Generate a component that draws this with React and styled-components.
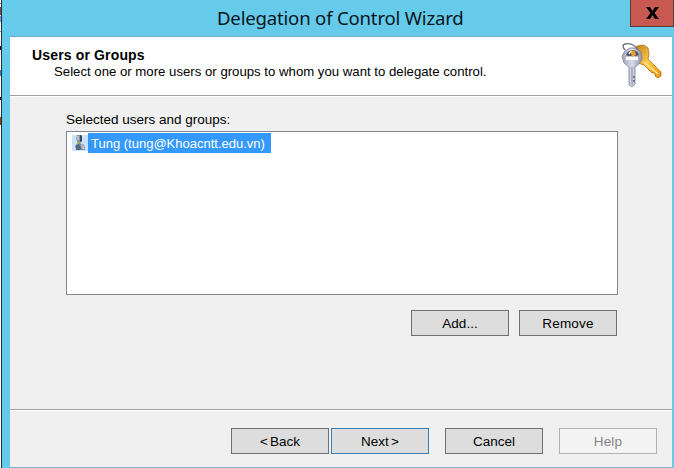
import React from "react";
import styled, { createGlobalStyle } from "styled-components";

const Global = createGlobalStyle`
  * { box-sizing: border-box; }
  body { margin: 0; overflow: hidden; background: #fff; }
`;

const Screen = styled.div`
  display: flex;
  width: 674px;
  height: 468px;
  font: 13px/16px "Liberation Sans", Arial, sans-serif;
  color: #000;
`;

const Backdrop = styled.svg`
  flex: none;
  display: block;
`;

const Window = styled.div`
  flex: 1;
  display: flex;
  flex-direction: column;
  padding: 0 2px 0 8px;
  background: #66caea;
`;

const TitleBar = styled.header`
  position: relative;
  height: 36px;
  flex: none;
  padding: 5px 0 0 207px;
`;

const Title = styled.h1`
  margin: 0;
  font: 400 18.6px/25px "Noto Sans", "Open Sans", sans-serif;
  letter-spacing: ${(p) => p.$spacing};
  white-space: nowrap;
  color: #06161c;
`;

const CloseButton = styled.button`
  position: absolute;
  top: 0;
  right: -2px;
  display: flex;
  justify-content: center;
  align-items: flex-start;
  width: 44px;
  height: 27px;
  padding: 7px 0 0;
  border: 1px solid #5b3a3d;
  border-top: 0;
  background: #c75950;
`;

const Dialog = styled.main`
  flex: 1;
  display: flex;
  flex-direction: column;
  border-top: 1px solid #76a9c3;
  border-bottom: 1px solid #7db7ca;
  background: #f0f0f0;
`;

const Banner = styled.section`
  display: flex;
  justify-content: space-between;
  height: 58px;
  flex: none;
  padding: 10px 8px 0 22px;
  background: #fff;
`;

const Heading = styled.h2`
  margin: 0;
  font-size: 14px;
  line-height: 17px;
  letter-spacing: ${(p) => p.$spacing};
`;

const Line = styled.p`
  margin: 0;
  padding-left: ${(p) => p.$indent || 0}px;
  font-size: ${(p) => p.$size};
  letter-spacing: ${(p) => p.$spacing || "0"};
  white-space: nowrap;
`;

const Keys = styled.svg`
  display: block;
  margin-top: -6px;
`;

const Divider = styled.div`
  height: 2px;
  flex: none;
  border-top: 1px solid #a0a0a0;
  border-bottom: 1px solid #fff;
`;

const Content = styled.section`
  height: 312px;
  flex: none;
  padding: 15px 54px 0 56px;
`;

const ListBox = styled.div`
  width: 552px;
  height: 164px;
  margin-top: 3px;
  padding: 1px 5px;
  border: 1px solid #828790;
  background: #fff;
`;

const ListItem = styled.div`
  display: flex;
  height: 20px;
`;

const ItemLabel = styled.span`
  width: 183px;
  padding: 3px 0 0 3px;
  background: #3399ff;
  color: #fff;
  white-space: nowrap;
`;

const ListActions = styled.div`
  display: flex;
  justify-content: flex-end;
  gap: 10px;
  margin: 15px 1px 0 0;
`;

const Footer = styled.footer`
  display: flex;
  flex: 1;
  padding: 17px 0 0 221px;
`;

const Button = styled.button`
  width: 98px;
  height: 26px;
  margin-left: ${(p) => p.$gap || 0}px;
  padding: 2px 0 0;
  border: 1px solid ${(p) => (p.disabled ? "#adb2b5" : p.$primary ? "#3c7fb1" : "#707070")};
  background: ${(p) => (p.disabled ? "#f4f4f4" : "#dddddd")};
  color: ${(p) => (p.disabled ? "#838383" : "#000")};
  font: inherit;
  font-size: 13.5px;
  letter-spacing: ${(p) => p.$spacing || "0"};
  word-spacing: -1.5px;
`;

function KeysIcon() {
  return (
    <Keys width="44" height="48" viewBox="0 0 44 48">
      <defs>
        <linearGradient id="gold" x2="1" y2="1">
          <stop offset="0" stopColor="#bd7a18" />
          <stop offset=".5" stopColor="#ffc94a" />
          <stop offset="1" stopColor="#e8940f" />
        </linearGradient>
        <linearGradient id="steel">
          <stop offset="0" stopColor="#a0a6bc" />
          <stop offset=".5" stopColor="#d8dbe7" />
          <stop offset="1" stopColor="#9094aa" />
        </linearGradient>
      </defs>
      <path d="M17 5 24 4 28 7 29 13 28 18 41 31 41 35 38 37 35 35 35 32 32 32 24 24 18 22 14 15Z" fill="url(#gold)" stroke="#b0701a" strokeWidth=".8" />
      <path d="M24 21 38 33" stroke="#ffe59a" strokeWidth="1.5" />
      <path d="M5 10 10 7 16 7 21 11 22 18 19 23 15 26V43L12 46 9 44V26L4 22 2 15Z" fill="url(#steel)" stroke="#7c8196" strokeWidth=".8" />
      <path d="M6 14Q8 9 13 9Q18 10 19 14L16 15H8Z" fill="#4f5367" />
      <path d="M10 9 15 10 16 14 12 16 11 12Z" fill="#e9a22c" />
      <path d="M9 13 11 10" stroke="#fff" strokeWidth="1.4" />
      <path d="M6 17.5H18" stroke="#fbfbff" strokeWidth="3" />
      <path d="M12 26V44" stroke="#797e95" strokeWidth=".9" />
      <path d="M14 35V37M14 39V41" stroke="#555b70" strokeWidth="1.5" />
      <path d="M5 9Q1 4 5 3Q13 1 18 9" fill="none" stroke="#697080" strokeWidth="1.4" />
    </Keys>
  );
}

function UserIcon() {
  return (
    <svg width="16" height="20" viewBox="0 0 16 20">
      <path fill="#c9e3fc" d="M0 2H16V18H0Z" />
      <path fill="#8493a3" d="M5 2H9L10 4V8L8 10 12 12 13 15V17H4L3 13 5 11 6 9 4 6Z" />
      <path fill="#384657" d="M8 2H9L10 4V8L8 9Z" />
      <path fill="#b9bec8" d="M5 3H7V7H5ZM9 11 12 13 13 16H10Z" />
      <path fill="#9caf4a" d="M5 8H7V11H5Z" />
      <path fill="#536778" d="M4 12 7 11 9 15 8 17H4Z" />
    </svg>
  );
}

export default function App() {
  return (
    <Screen>
      <Global />
      <Backdrop width="2" height="468" shapeRendering="crispEdges">
        <path fill="#fff" d="M0 0H1V468H0Z" />
        <path fill="#969696" d="M0 3H1V4H0ZM0 31H1V32H0Z" />
        <path fill="#75513e" d="M0 7H1V15H0Z" />
        <path fill="#6e9ed4" d="M0 16H1V22H0Z" />
        <path fill="#25104c" d="M0 46H1V50H0ZM0 97H1V100H0Z" />
        <path fill="#3187c5" d="M0 70H1V76H0Z" />
        <path fill="#95400f" d="M0 117H1V125H0Z" />
        <path fill="#243038" d="M1 0H2V468H1Z" />
      </Backdrop>
      <Window>
        <TitleBar>
          <Title $spacing="-0.2px">Delegation of Control Wizard</Title>
          <CloseButton aria-label="Close">
            <svg width="13" height="12" viewBox="0 0 13 12">
              <path d="M0 0H4L6.5 4 9 0H13L8.5 6 13 12H9L6.5 8 4 12H0L4.5 6Z" />
            </svg>
          </CloseButton>
        </TitleBar>
        <Dialog>
          <Banner>
            <div>
              <Heading $spacing="0.15px">Users or Groups</Heading>
              <Line $indent={22} $size="13.2px">Select one or more users or groups to whom you want to delegate control.</Line>
            </div>
            <KeysIcon />
          </Banner>
          <Divider />
          <Content>
            <Line $size="13.5px">Selected users and groups:</Line>
            <ListBox>
              <ListItem>
                <UserIcon />
                <ItemLabel>Tung (tung@Khoacntt.edu.vn)</ItemLabel>
              </ListItem>
            </ListBox>
            <ListActions>
              <Button>Add...</Button>
              <Button $spacing="0.2px">Remove</Button>
            </ListActions>
          </Content>
          <Divider />
          <Footer>
            <Button>&lt; Back</Button>
            <Button $primary $gap={2}>Next &gt;</Button>
            <Button $gap={16}>Cancel</Button>
            <Button $gap={16} disabled $spacing="0.2px">Help</Button>
          </Footer>
        </Dialog>
      </Window>
    </Screen>
  );
}
